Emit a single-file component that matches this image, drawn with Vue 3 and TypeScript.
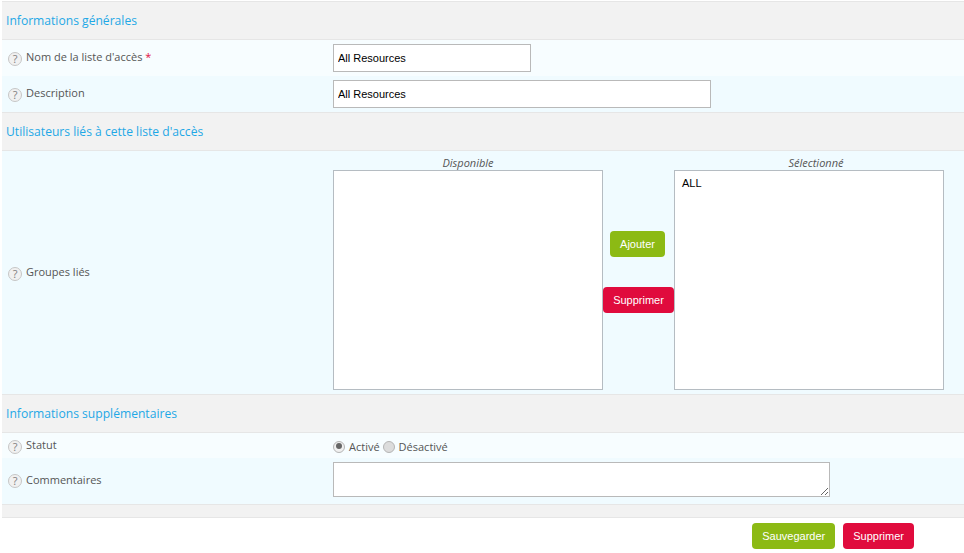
<script setup lang="ts">
const title = 'Informations générales'
</script>

<template>
  <div class="page">
    <form class="form" @submit.prevent>
      <h2 class="section">{{ title }}</h2>
      <div class="row light r1">
        <div class="label"><span class="help">?</span><span class="ltext">Nom de la liste d'accès <b class="req">*</b></span></div>
        <div class="field"><input class="input w198" value="All Resources" /></div>
      </div>
      <div class="row dark r2">
        <div class="label"><span class="help">?</span><span class="ltext">Description</span></div>
        <div class="field"><input class="input w378" value="All Resources" /></div>
      </div>
      <h2 class="section">Utilisateurs liés à cette liste d'accès</h2>
      <div class="row dark r3">
        <div class="label"><span class="help">?</span><span class="ltext">Groupes liés</span></div>
        <div class="field dual">
          <div class="col">
            <div class="cap">Disponible</div>
            <div class="box"></div>
          </div>
          <div class="mid">
            <button type="button" class="btn green">Ajouter</button>
            <button type="button" class="btn red">Supprimer</button>
          </div>
          <div class="col">
            <div class="cap shifted">Sélectionné</div>
            <div class="box"><div class="opt">ALL</div></div>
          </div>
        </div>
      </div>
      <h2 class="section">Informations supplémentaires</h2>
      <div class="row light r4">
        <div class="label"><span class="help">?</span><span class="ltext">Statut</span></div>
        <div class="field radios">
          <span class="radio on"></span><span class="rt first">Activé</span>
          <span class="radio"></span><span class="rt second">Désactivé</span>
        </div>
      </div>
      <div class="row dark r5">
        <div class="label"><span class="help">?</span><span class="ltext">Commentaires</span></div>
        <div class="field top"><textarea class="area"></textarea></div>
      </div>
      <div class="strip"></div>
      <div class="actions">
        <button type="button" class="btn green">Sauvegarder</button>
        <button type="button" class="btn red">Supprimer</button>
      </div>
    </form>
  </div>
</template>

<style>
html, body { margin: 0; background: #fff; overflow: hidden; }
</style>

<style scoped>
.page {
  width: 964px;
  height: 553px;
  padding: 1px 0 0 2px;
  box-sizing: border-box;
  font-family: "Open Sans", sans-serif;
  font-size: 11px;
  color: #555;
}
.section {
  margin: 0;
  height: 39px;
  box-sizing: border-box;
  background: #f2f2f2;
  border-top: 1px solid #e6e6e6;
  border-bottom: 1px solid #e6e6e6;
  padding: 0 0 0 4px;
  font-size: 12.12px;
  font-weight: 400;
  line-height: 37px;
  color: #1fa8e6;
}
.row { display: flex; box-sizing: border-box; }
.light { background: #f7fdff; }
.dark { background: #f0fbff; }
.r1 { height: 36px; }
.r2 { height: 36px; }
.r3 { height: 243px; }
.r4 { height: 25px; }
.r5 { height: 46px; }
.label {
  width: 331px;
  flex: none;
  display: flex;
  align-items: center;
  padding-left: 6px;
  box-sizing: border-box;
  gap: 4px;
}
.ltext { position: relative; top: -2px; }
.r3 .ltext, .r4 .ltext { top: -1px; }
.help {
  flex: none;
  width: 14px;
  height: 14px;
  box-sizing: border-box;
  border-radius: 50%;
  border: 1.5px solid #c6c6c6;
  background: #f1f1f1;
  color: #808080;
  font-size: 11px;
  font-weight: 400;
  line-height: 11px;
  text-align: center;
  position: relative;
  top: 1px;
}
.r5 .help { top: 0; }
.req { color: #e2123f; font-weight: 400; }
.field { display: flex; align-items: center; flex: 1; }
.field.top { align-items: flex-start; padding-top: 4px; }
.input {
  height: 28px;
  box-sizing: border-box;
  border: 1px solid #b9b9b9;
  background: #fff;
  padding: 0 4px;
  margin: 0;
  font-family: "Liberation Sans", sans-serif;
  font-size: 11px;
  color: #000;
  outline: none;
  border-radius: 0;
}
.w198 { width: 198px; }
.w378 { width: 378px; }
.dual { align-items: flex-start; }
.col { width: 270px; flex: none; }
.cap {
  height: 19px;
  line-height: 24px;
  text-align: center;
  font-style: italic;
  font-size: 11px;
  color: #555;
}
.cap.shifted { padding-left: 14px; }
.box {
  height: 220px;
  box-sizing: border-box;
  border: 1px solid #b5bcc2;
  background: #fff;
  padding: 6px 7px;
  font-family: "Liberation Sans", sans-serif;
  font-size: 11px;
  color: #000;
}
.opt { line-height: 13px; }
.mid {
  width: 71px;
  flex: none;
  display: flex;
  flex-direction: column;
  align-items: center;
  gap: 30px;
  padding-top: 80px;
}
.btn {
  height: 26px;
  border: 0;
  border-radius: 4px;
  margin: 0;
  padding: 0 10px;
  font-family: "Liberation Sans", sans-serif;
  font-size: 11px;
  color: #fff;
}
.mid .green { width: 55px; padding: 0; position: relative; left: -1px; }
.mid .red { width: 71px; padding: 0; }
.green { background: #8cba14; }
.red { background: #e00b3d; }
.radios { gap: 3px; padding-top: 2px; }
.radio {
  width: 12px;
  height: 12px;
  box-sizing: border-box;
  border-radius: 50%;
  border: 1.5px solid #b5b5b5;
  background: #dcdcdc;
  position: relative;
}
.radio.on { background: #f0f0f0; }
.radio.on::after {
  content: "";
  position: absolute;
  left: 1.5px;
  top: 1.5px;
  width: 6px;
  height: 6px;
  border-radius: 50%;
  background: #666;
}
.rt.first { margin-left: 1px; }
.rt.second { margin-left: 1px; }
.area {
  display: block;
  width: 497px;
  height: 35px;
  box-sizing: border-box;
  border: 1px solid #b9b9b9;
  background: #fff;
  margin: 0;
  padding: 2px;
  outline: none;
  border-radius: 0;
}
.strip {
  height: 14px;
  box-sizing: border-box;
  background: #f2f2f2;
  border-top: 1px solid #e6e6e6;
  border-bottom: 1px solid #e6e6e6;
}
.actions {
  display: flex;
  justify-content: flex-end;
  gap: 8px;
  padding: 5px 50px 0 0;
}
</style>
